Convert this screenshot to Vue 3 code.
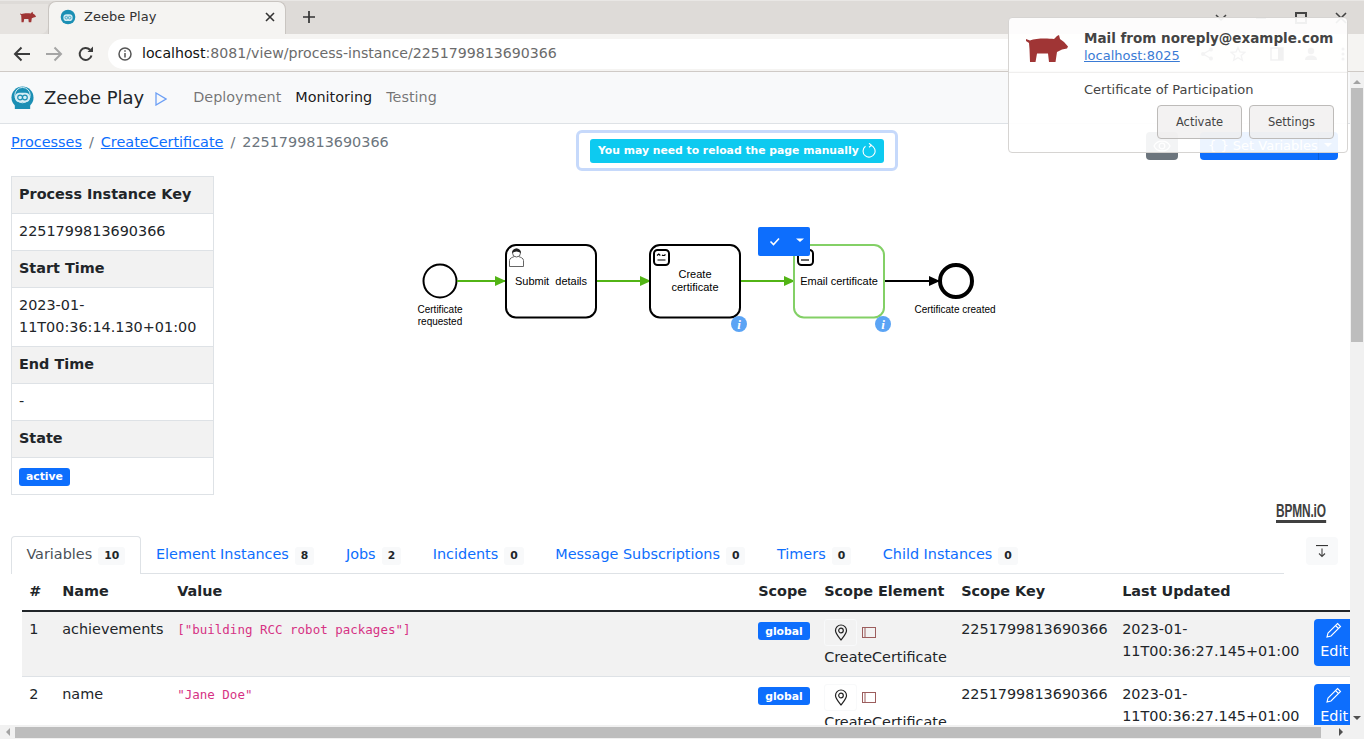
<template>
  <div class="screen">
    <!-- browser chrome -->
    <div class="tabstrip">
      <div class="tab-idle">
        <svg class="pig-small" width="16" height="14" viewBox="0 0 42 27"><path :d="pigPath" fill="#a03535" /></svg>
      </div>
      <div class="tab-active">
        <svg width="16" height="16" viewBox="0 0 24 24"><circle cx="12" cy="12" r="11" fill="#1b8fb4" /><rect x="5" y="8" width="14" height="10" rx="5" fill="#cfe9f2" /><circle cx="9.5" cy="13" r="2" fill="none" stroke="#1b8fb4" /><circle cx="14.5" cy="13" r="2" fill="none" stroke="#1b8fb4" /></svg>
        <span class="tab-title">Zeebe Play</span>
        <svg class="tab-close" width="10" height="10" viewBox="0 0 10 10"><path d="M1 1l8 8M9 1l-8 8" stroke="#333" stroke-width="1.6" /></svg>
      </div>
      <svg class="tab-new" width="14" height="14" viewBox="0 0 14 14"><path d="M7 1v12M1 7h12" stroke="#333" stroke-width="1.7" /></svg>
      <div class="win-controls">
        <svg width="12" height="8" viewBox="0 0 12 8"><path d="M1 1l5 5 5-5" fill="none" stroke="#444" stroke-width="1.5" /></svg>
        <svg width="12" height="8" viewBox="0 0 12 8"><path d="M1 4h10" stroke="#444" stroke-width="1.5" /></svg>
        <svg width="12" height="12" viewBox="0 0 12 12"><rect x="1" y="1" width="10" height="10" fill="none" stroke="#444" stroke-width="2" /></svg>
        <svg width="12" height="12" viewBox="0 0 12 12"><path d="M1 1l10 10M11 1L1 11" stroke="#444" stroke-width="1.6" /></svg>
      </div>
    </div>
    <div class="toolbar">
      <svg width="18" height="16" viewBox="0 0 18 16"><path d="M17 8H2M8.500 1.500L2 8l6.500 6.500" fill="none" stroke="#3c3c3c" stroke-width="2" /></svg>
      <svg class="tb-fwd" width="18" height="16" viewBox="0 0 18 16"><path d="M1 8h15M9.500 1.500L16 8l-6.500 6.500" fill="none" stroke="#a5a5a5" stroke-width="2" /></svg>
      <svg class="tb-reload" width="16" height="16" viewBox="0 0 16 16"><path d="M13.500 9.500A6 6 0 1 1 12 3.800" fill="none" stroke="#3c3c3c" stroke-width="2" /><path d="M9.500 6h5.500V.5z" fill="#3c3c3c" /></svg>
      <div class="urlbar">
        <svg width="14" height="14" viewBox="0 0 14 14"><circle cx="7" cy="7" r="6" fill="none" stroke="#555" stroke-width="1.500" /><path d="M7 6v4.500M7 3.200v1.600" stroke="#555" stroke-width="1.500" /></svg>
        <span class="url"><span class="url-host">localhost</span>:8081/view/process-instance/2251799813690366</span>
      </div>
      <div class="tb-right">
        <svg width="14" height="14" viewBox="0 0 14 14"><path d="M11 2.500L3 7l8 4.500" fill="none" stroke="#666" stroke-width="1.300" /><circle cx="11" cy="2.500" r="2" fill="#666" /><circle cx="3" cy="7" r="2" fill="#666" /><circle cx="11" cy="11.500" r="2" fill="#666" /></svg>
        <svg class="ic-star" width="16" height="16" viewBox="0 0 16 16"><path d="M8 1.500l2 4.500 4.800.4-3.600 3.200 1.100 4.700L8 11.800l-4.300 2.500 1.100-4.700L1.200 6.400 6 6z" fill="none" stroke="#666" stroke-width="1.300" /></svg>
        <svg class="ic-reader" width="14" height="14" viewBox="0 0 14 14"><rect x="1" y="1" width="12" height="12" fill="none" stroke="#555" stroke-width="1.500" /><rect x="8" y="1" width="5" height="12" fill="#555" /></svg>
        <svg class="ic-user" width="14" height="14" viewBox="0 0 14 14"><circle cx="7" cy="4" r="3.200" fill="#666" /><path d="M1 13c0-3.500 3-4.500 6-4.500s6 1 6 4.500z" fill="#666" /></svg>
        <svg class="ic-menu" width="4" height="14" viewBox="0 0 4 14"><circle cx="2" cy="2" r="1.500" fill="#666" /><circle cx="2" cy="7" r="1.500" fill="#666" /><circle cx="2" cy="12" r="1.500" fill="#666" /></svg>
      </div>
    </div>

    <div class="viewport">
      <div class="page">
        <nav class="navbar">
          <a class="brand">
            <svg width="23" height="23" viewBox="0 0 24 24"><circle cx="12" cy="12" r="11.500" fill="#1b8fb4" /><circle cx="12" cy="9.500" r="8" fill="none" stroke="#d7eef5" stroke-width="1" /><rect x="4" y="7" width="16" height="10" rx="5" fill="#d7eef5" /><circle cx="9.500" cy="12" r="2.500" fill="none" stroke="#1b8fb4" stroke-width="1.200" /><circle cx="14.500" cy="12" r="2.500" fill="none" stroke="#1b8fb4" stroke-width="1.200" /><rect x="4" y="20" width="16" height="4" fill="#1b8fb4" /></svg>
            <span>Zeebe Play</span>
          </a>
          <svg class="play" width="12" height="14" viewBox="0 0 12 14"><path d="M1 1l10 6-10 6z" fill="none" stroke="#6c9ff5" stroke-width="1.300" /></svg>
          <a class="nav-link">Deployment</a>
          <a class="nav-link current">Monitoring</a>
          <a class="nav-link">Testing</a>
        </nav>

        <div class="crumb-row">
          <div class="crumbs">
            <a>Processes</a><span class="sep">/</span><a>CreateCertificate</a><span class="sep">/</span><span>2251799813690366</span>
          </div>
          <div class="actions">
            <button class="btn-eye">
              <svg width="18" height="12" viewBox="0 0 18 12"><path d="M1 6c3-6.500 13-6.500 16 0-3 6.500-13 6.500-16 0z" fill="none" stroke="#fff" stroke-width="1.200" /><circle cx="9" cy="6" r="2.800" fill="none" stroke="#fff" stroke-width="1.200" /></svg>
            </button>
            <div class="btn-vars">
              <span class="vars-main">{ } Set Variables</span>
              <span class="vars-caret"></span>
            </div>
          </div>
        </div>

        <div class="overview">
          <table class="info">
            <tbody>
              <tr v-for="row in infoRows" :key="row.text">
                <th v-if="row.head">{{ row.text }}</th>
                <td v-else-if="row.badge"><span class="badge">{{ row.text }}</span></td>
                <td v-else>{{ row.text }}</td>
              </tr>
            </tbody>
          </table>
          <div class="canvas">
            <svg width="1136" height="376" viewBox="214 160 1136 376" font-family="'Liberation Sans', Arial, sans-serif" fill="#000">
              <defs>
                <marker id="arrow-green" markerWidth="12" markerHeight="10" refX="11" refY="5" orient="auto" markerUnits="userSpaceOnUse"><path d="M0 0l11 5-11 5z" fill="#52b415" /></marker>
                <marker id="arrow-black" markerWidth="12" markerHeight="10" refX="11" refY="5" orient="auto" markerUnits="userSpaceOnUse"><path d="M0 0l11 5-11 5z" fill="#000" /></marker>
              </defs>
              <circle cx="440" cy="281" r="16.500" fill="#fff" stroke="#000" stroke-width="2" />
              <text x="440" y="313" font-size="10" text-anchor="middle">Certificate</text>
              <text x="440" y="325" font-size="10" text-anchor="middle">requested</text>
              <path d="M457 281h49" stroke="#52b415" stroke-width="2" marker-end="url(#arrow-green)" />

              <rect x="506" y="245" width="90" height="72.500" rx="10" fill="#fff" stroke="#000" stroke-width="2" />
              <g fill="#fff" stroke="#555" stroke-width="0.900">
                <path d="M509.500 266.500v-6c0-2.500 3-3.200 5-4h4c2 .8 5 1.500 5 4v6z" />
                <circle cx="516.500" cy="253" r="4" />
              </g>
              <path d="M512 253c0-6 9-6 9 0-3-2-6-2-9 0z" fill="#222" />
              <text x="551" y="285" font-size="11" text-anchor="middle">Submit&#160; details</text>
              <path d="M597 281h54" stroke="#52b415" stroke-width="2" marker-end="url(#arrow-green)" />

              <rect x="650" y="245" width="90" height="72.500" rx="10" fill="#fff" stroke="#000" stroke-width="2" />
              <rect x="654" y="250" width="15" height="15" rx="3.500" fill="#fff" stroke="#000" stroke-width="2" />
              <path d="M657 255.500l1.800-1.500 1.500 1.500M662 255c1 .8 2 .8 3.500-.5M657.500 260h8" fill="none" stroke="#000" stroke-width="1.200" />
              <text x="695" y="278" font-size="11" text-anchor="middle">Create</text>
              <text x="695" y="291" font-size="11" text-anchor="middle">certificate</text>
              <path d="M741 281h54" stroke="#52b415" stroke-width="2" marker-end="url(#arrow-green)" />
              <circle cx="739" cy="324" r="8" fill="#5ba4f5" />
              <text x="739" y="329" font-size="13" font-weight="700" font-style="italic" fill="#fff" text-anchor="middle" font-family="'Liberation Serif', serif">i</text>

              <rect x="794" y="245" width="90" height="72.500" rx="10" fill="#fff" stroke="#83d066" stroke-width="2" />
              <rect x="798" y="250" width="15" height="15" rx="3.500" fill="#fff" stroke="#000" stroke-width="2" />
              <path d="M801 260h8" stroke="#000" stroke-width="1.200" />
              <text x="839" y="285" font-size="11" text-anchor="middle">Email certificate</text>
              <circle cx="883" cy="324" r="8" fill="#5ba4f5" />
              <text x="883" y="329" font-size="13" font-weight="700" font-style="italic" fill="#fff" text-anchor="middle" font-family="'Liberation Serif', serif">i</text>
              <path d="M885 281h55" stroke="#000" stroke-width="2" marker-end="url(#arrow-black)" />

              <circle cx="956" cy="281" r="16" fill="#fff" stroke="#000" stroke-width="4" />
              <text x="955" y="313" font-size="10" text-anchor="middle">Certificate created</text>

              <rect x="758" y="227" width="52" height="29" rx="2" fill="#0d6efd" />
              <path d="M770.500 241.500l3 3 5.500-6" fill="none" stroke="#fff" stroke-width="1.600" />
              <path d="M796 238.500h8l-4 3.500z" fill="#fff" />
            </svg>
            <a class="bpmn-logo">BPMN.iO</a>
          </div>
        </div>

        <div class="tab-row">
          <ul class="tabs">
            <li v-for="(t, i) in tabs" :key="t.label" :class="{ active: i === 0 }">
              <span>{{ t.label }}</span><span class="count">{{ t.count }}</span>
            </li>
          </ul>
          <button class="collapse">
            <svg width="12" height="13" viewBox="0 0 12 13"><path d="M0 .6h12" stroke="#222" /><path d="M6 3.500v8M3 8.500l3 3 3-3" fill="none" stroke="#444" stroke-width="1.100" /></svg>
          </button>
        </div>

        <table class="vars">
          <colgroup>
            <col v-for="w in colWidths" :key="w.name" :style="{ width: w.width + 'px' }" />
          </colgroup>
          <thead>
            <tr>
              <th v-for="w in colWidths" :key="w.name">{{ w.title }}</th>
            </tr>
          </thead>
          <tbody>
            <tr v-for="v in variables" :key="v.idx">
              <td>{{ v.idx }}</td>
              <td>{{ v.name }}</td>
              <td><code>{{ v.value }}</code></td>
              <td><span class="badge scope">global</span></td>
              <td>
                <div class="scope-icons">
                  <span class="pin-btn">
                    <svg width="14" height="17" viewBox="0 0 14 17"><path d="M7 16C4 12 1.500 9.500 1.500 6.500a5.500 5.500 0 0 1 11 0C12.500 9.500 10 12 7 16z" fill="none" stroke="#222" stroke-width="1.200" /><circle cx="7" cy="6.500" r="2.300" fill="none" stroke="#222" stroke-width="1.200" /></svg>
                  </span>
                  <svg width="14" height="11" viewBox="0 0 14 11"><rect x=".5" y=".5" width="13" height="10" fill="none" stroke="#9c5d5d" /><path d="M3 .5v10" stroke="#9c5d5d" /></svg>
                </div>
                <div class="scope-name">CreateCertificate</div>
              </td>
              <td>2251799813690366</td>
              <td>2023-01-11T00:36:27.145+01:00</td>
              <td>
                <button class="btn-edit">
                  <svg width="16" height="16" viewBox="0 0 16 16"><path d="M11.500 1.500l3 3L5 14l-4 1 1-4zM9.500 3.500l3 3" fill="none" stroke="#fff" stroke-width="1.100" /></svg>
                  <span>Edit</span>
                </button>
              </td>
            </tr>
          </tbody>
        </table>
      </div>

      <div class="scroll-v">
        <span class="arr up"></span>
        <span class="thumb-v"></span>
        <span class="arr down"></span>
      </div>
      <div class="scroll-h">
        <span class="arr left"></span>
        <span class="thumb-h"></span>
        <span class="arr right"></span>
      </div>
    </div>

    <!-- overlays -->
    <div class="reload-toast">
      <span class="reload-pill">You may need to reload the page manually
        <svg width="14" height="15" viewBox="0 0 14 15"><path d="M8.500 2.300A6 6 0 1 1 3.500 3.300" fill="none" stroke="#fff" stroke-width="1.100" /><path d="M7 .3l2.500 2-2.500 2" fill="none" stroke="#fff" stroke-width="1.100" /></svg>
      </span>
    </div>

    <div class="notification">
      <div class="note-head">
        <svg class="pig" width="42" height="27" viewBox="0 0 42 27"><path :d="pigPath" fill="#a03535" /></svg>
        <div>
          <div class="note-title">Mail from noreply@example.com</div>
          <a class="note-link">localhost:8025</a>
        </div>
      </div>
      <div class="note-body">Certificate of Participation</div>
      <div class="note-actions">
        <button>Activate</button>
        <button>Settings</button>
      </div>
    </div>
  </div>
</template>

<script setup>
const pigPath = 'M0 4l4 1.500C10 3 22 3.500 28 4l3-3 2-1 1 4 4 3 4 4.500-1 2-5 1-5 2.500-1.500 10H23l-1-8.500H11L9.500 27H4l-.5-13L3 8 0 6z'

const infoRows = [
  { text: 'Process Instance Key', head: true },
  { text: '2251799813690366' },
  { text: 'Start Time', head: true },
  { text: '2023-01-11T00:36:14.130+01:00' },
  { text: 'End Time', head: true },
  { text: '-' },
  { text: 'State', head: true },
  { text: 'active', badge: true }
]

const tabs = [
  { label: 'Variables', count: 10 },
  { label: 'Element Instances', count: 8 },
  { label: 'Jobs', count: 2 },
  { label: 'Incidents', count: 0 },
  { label: 'Message Subscriptions', count: 0 },
  { label: 'Timers', count: 0 },
  { label: 'Child Instances', count: 0 }
]

const colWidths = [
  { name: 'idx', title: '#', width: 33 },
  { name: 'name', title: 'Name', width: 115 },
  { name: 'value', title: 'Value', width: 581 },
  { name: 'scope', title: 'Scope', width: 66 },
  { name: 'el', title: 'Scope Element', width: 137 },
  { name: 'key', title: 'Scope Key', width: 161 },
  { name: 'upd', title: 'Last Updated', width: 192 },
  { name: 'edit', title: '', width: 55 }
]

const variables = [
  { idx: 1, name: 'achievements', value: '["building RCC robot packages"]' },
  { idx: 2, name: 'name', value: '"Jane Doe"' }
]
</script>

<style>
html, body {
  margin: 0;
  overflow: hidden;
}
</style>

<style scoped>
.screen {
  position: relative;
  width: 1364px;
  height: 739px;
  overflow: hidden;
  font-family: "DejaVu Sans", sans-serif;
  font-size: 14.400px;
  line-height: 21.600px;
  color: #212529;
  background: #fff;
}

.tabstrip {
  height: 33px;
  background: #dedbd8;
  display: flex;
  align-items: flex-end;
  border-top: 1px solid #e9e7e5;
}
.tab-idle {
  width: 48px;
  height: 30px;
  padding: 0 0 4px 20px;
  box-sizing: border-box;
  background: #e6e3e0;
  border-bottom-right-radius: 8px;
  display: flex;
  align-items: center;
}
.tab-active {
  width: 238px;
  height: 33px;
  box-sizing: border-box;
  padding: 0 10px 2px 11px;
  background: #f5f4f2;
  border-radius: 8px 8px 0 0;
  border: 1px solid #c9c5c1;
  border-bottom: none;
  display: flex;
  align-items: center;
  gap: 8px;
  font-size: 13px;
  color: #333;
}
.tab-title {
  flex: 1;
}
.tab-new {
  margin: 0 0 10px 16px;
}
.win-controls {
  position: absolute;
  top: 12px;
  right: 17px;
  display: flex;
  align-items: center;
  gap: 28px;
}

.toolbar {
  height: 35px;
  padding: 2px 0 0 13px;
  background: #f5f4f2;
  border-bottom: 1px solid #cfcac6;
  display: flex;
  align-items: center;
  position: relative;
}
.tb-fwd {
  margin-left: 14px;
}
.tb-reload {
  margin-left: 15px;
}
.urlbar {
  margin-left: 14px;
  width: 1090px;
  height: 30px;
  border-radius: 15px;
  background: #fff;
  display: flex;
  align-items: center;
  padding-left: 10px;
  box-sizing: border-box;
  gap: 10px;
}
.url {
  font-size: 14.170px;
  color: #6b6b6b;
}
.url-host {
  color: #111;
}
.tb-right {
  position: absolute;
  top: 12px;
  left: 1200px;
  display: flex;
  align-items: center;
}
.ic-star { margin-left: 16px; }
.ic-reader { margin-left: 24px; }
.ic-user { margin-left: 20px; }
.ic-menu { margin-left: 23px; }

.viewport {
  display: grid;
  grid-template-columns: 1350px 14px;
  grid-template-rows: 653px 14px;
}
.page {
  overflow: hidden;
  min-width: 0;
}
.navbar {
  height: 52px;
  padding: 0 0 0 11px;
  background: #f8f9fa;
  border-bottom: 1px solid #dee2e6;
  display: flex;
  align-items: center;
  box-sizing: border-box;
}
.brand {
  display: flex;
  align-items: center;
  gap: 10px;
  font-size: 18px;
  color: #212529;
}
.play {
  margin: 2px 0 0 11px;
}
.nav-link {
  margin-left: 14px;
  color: rgba(0, 0, 0, .55);
}
.play + .nav-link {
  margin-left: 26px;
}
.nav-link.current {
  color: rgba(0, 0, 0, .9);
}

.crumb-row {
  height: 36px;
  padding: 8px 12px 0 11px;
  box-sizing: border-box;
  display: flex;
  justify-content: space-between;
  align-items: flex-start;
  color: #6c757d;
}
.crumbs a {
  color: #0d6efd;
  text-decoration: underline;
}
.sep {
  margin: 0 7px;
}
.actions {
  display: flex;
  gap: 22px;
}
.btn-eye {
  width: 32px;
  height: 28px;
  border: none;
  border-radius: 4px;
  background: #6c757d;
  display: flex;
  align-items: center;
  justify-content: center;
}
.btn-vars {
  width: 138px;
  height: 28px;
  border-radius: 4px;
  background: #0d6efd;
  color: #fff;
  display: flex;
  align-items: center;
  font-size: 13px;
  white-space: nowrap;
}
.vars-main {
  flex: 1;
  padding-left: 8px;
}
.vars-caret {
  width: 20px;
  height: 100%;
  border-left: 1px solid #0b5ed7;
  position: relative;
}
.vars-caret::after {
  content: "";
  position: absolute;
  left: 5px;
  top: 11px;
  border: 4px solid transparent;
  border-top-color: #fff;
}

.overview {
  display: flex;
  height: 376px;
  padding-left: 11px;
  padding-top: 16px;
  box-sizing: border-box;
}
.info {
  width: 203px;
  flex: none;
  align-self: flex-start;
  border-collapse: collapse;
  table-layout: fixed;
  line-height: 22px;
}
.info th,
.info td {
  border: 1px solid #dee2e6;
  padding: 6px 7px 8px;
  text-align: left;
  vertical-align: top;
}
.info th {
  background: #f2f2f2;
  font-weight: 700;
}
.badge {
  display: inline-block;
  background: #0d6efd;
  color: #fff;
  font-size: 10.800px;
  font-weight: 700;
  line-height: 11px;
  padding: 3.500px 7px;
  border-radius: 3px;
  vertical-align: 0;
}
.canvas {
  position: relative;
  flex: 1;
  margin-top: -16px;
}
.canvas svg {
  display: block;
}
.bpmn-logo {
  position: absolute;
  left: 1062px;
  top: 342px;
  font-family: "Liberation Sans", sans-serif;
  font-weight: 700;
  font-size: 18px;
  line-height: 18px;
  letter-spacing: -.2px;
  color: #404040;
  border-bottom: 3px solid #404040;
  display: block;
  transform: scaleX(.66);
  transform-origin: left top;
  white-space: nowrap;
}

.tab-row {
  position: relative;
  padding-left: 11px;
  height: 38px;
}
.tabs {
  list-style: none;
  margin: 0;
  padding: 0;
  width: 1273px;
  height: 38px;
  box-sizing: border-box;
  border-bottom: 1px solid #dee2e6;
  display: flex;
}
.tabs li {
  padding: 7px 14.400px 0;
  height: 38px;
  box-sizing: border-box;
  color: #0d6efd;
  border: 1px solid transparent;
  border-bottom: none;
  white-space: nowrap;
  margin-right: .8px;
}
.tabs li.active {
  color: #495057;
  background: #fff;
  border-color: #dee2e6;
  border-radius: 4px 4px 0 0;
  margin-right: 0;
}
.count {
  display: inline-block;
  margin-left: 6px;
  padding: 0 6px;
  height: 18px;
  line-height: 18px;
  background: #f8f9fa;
  color: #212529;
  font-size: 10.800px;
  font-weight: 700;
  border-radius: 3px;
  vertical-align: 0;
}
.collapse {
  position: absolute;
  top: 1px;
  left: 1306px;
  width: 32px;
  height: 28px;
  padding: 0;
  border: none;
  border-radius: 4px;
  background: #f8f9fa;
  display: flex;
  align-items: center;
  justify-content: center;
}

.vars {
  margin-left: 22px;
  width: 1340px;
  table-layout: fixed;
  border-collapse: collapse;
}
.vars th {
  text-align: left;
  padding: 7.200px;
  height: 37px;
  box-sizing: border-box;
  border-bottom: 2px solid #212529;
  font-weight: 700;
  white-space: nowrap;
}
.vars td {
  padding: 7.200px;
  vertical-align: top;
  height: 65px;
  box-sizing: border-box;
  border-bottom: 1px solid #dee2e6;
}
.vars tbody tr:nth-child(odd) td {
  background: #f2f2f2;
}
code {
  font-family: "DejaVu Sans Mono", monospace;
  font-size: 12.500px;
  color: #d63384;
}
.scope {
  margin-top: 3px;
  vertical-align: top;
}
.scope-icons {
  display: flex;
  align-items: center;
  gap: 5px;
  height: 27px;
}
.scope-name {
  margin-top: 1px;
}
.pin-btn {
  width: 33px;
  height: 27px;
  box-sizing: border-box;
  border: 1px solid #f8f9fa;
  border-radius: 3px;
  display: flex;
  align-items: center;
  justify-content: center;
}
.btn-edit {
  width: 40px;
  height: 47px;
  padding: 3px 0 0;
  border: none;
  border-radius: 4px;
  background: #0d6efd;
  color: #fff;
  font: inherit;
  line-height: 20px;
  display: flex;
  flex-direction: column;
  align-items: center;
}
.btn-edit svg {
  margin-bottom: 3px;
  flex: none;
}

.scroll-v {
  background: #f1f1f1;
  position: relative;
}
.thumb-v {
  position: absolute;
  top: 16px;
  left: 1px;
  width: 12px;
  height: 254px;
  background: #bdbdbd;
}
.scroll-h {
  grid-column: 1 / 3;
  background: #f1f1f1;
  position: relative;
}
.thumb-h {
  position: absolute;
  left: 15px;
  top: 2px;
  width: 1306px;
  height: 11px;
  background: #bdbdbd;
}
.arr {
  position: absolute;
  width: 0;
  height: 0;
  border: 4px solid transparent;
}
.arr.up { top: 4px; left: 3px; border-bottom-color: #a3a3a3; }
.arr.down { bottom: 1px; left: 3px; border-top-color: #505050; }
.arr.left { left: 2px; top: 3px; border-right-color: #a3a3a3; }
.arr.right { left: 1339px; top: 3px; border-left-color: #505050; }

.reload-toast {
  position: absolute;
  left: 576px;
  top: 130px;
  width: 322px;
  height: 41px;
  box-sizing: border-box;
  border: 3px solid #c6d9fb;
  border-radius: 6px;
  background: #fff;
  display: flex;
  align-items: center;
  justify-content: center;
}
.reload-pill {
  width: 294px;
  height: 24px;
  box-sizing: border-box;
  padding-left: 8px;
  border-radius: 3px;
  background: #0dcaf0;
  color: #fff;
  font-size: 10.800px;
  font-weight: 700;
  display: flex;
  align-items: center;
  gap: 3px;
  white-space: nowrap;
}

.notification {
  position: absolute;
  left: 1008px;
  top: 17px;
  width: 340px;
  height: 136px;
  box-sizing: border-box;
  background: rgba(255, 255, 255, .92);
  border: 1px solid #d6d4d2;
  border-radius: 4px;
  color: #444;
  font-size: 13px;
}
.note-head {
  height: 55px;
  border-bottom: 1px solid #f0efee;
  display: flex;
  padding: 12px 0 0 75px;
  box-sizing: border-box;
  position: relative;
  line-height: 17px;
}
.pig {
  position: absolute;
  left: 17px;
  top: 17px;
}
.note-title {
  font-weight: 700;
  font-size: 13.500px;
  white-space: nowrap;
}
.note-link {
  color: #3a7bd5;
  text-decoration: underline;
}
.note-body {
  padding: 6px 0 0 75px;
}
.note-actions {
  position: absolute;
  top: 87px;
  right: 13px;
  display: flex;
  gap: 7px;
}
.note-actions button {
  width: 85px;
  height: 34px;
  background: rgba(238, 237, 236, .7);
  border: 1px solid #bdbbb9;
  border-radius: 4px;
  color: #444;
  font-family: inherit;
  font-size: 11.500px;
}
</style>
